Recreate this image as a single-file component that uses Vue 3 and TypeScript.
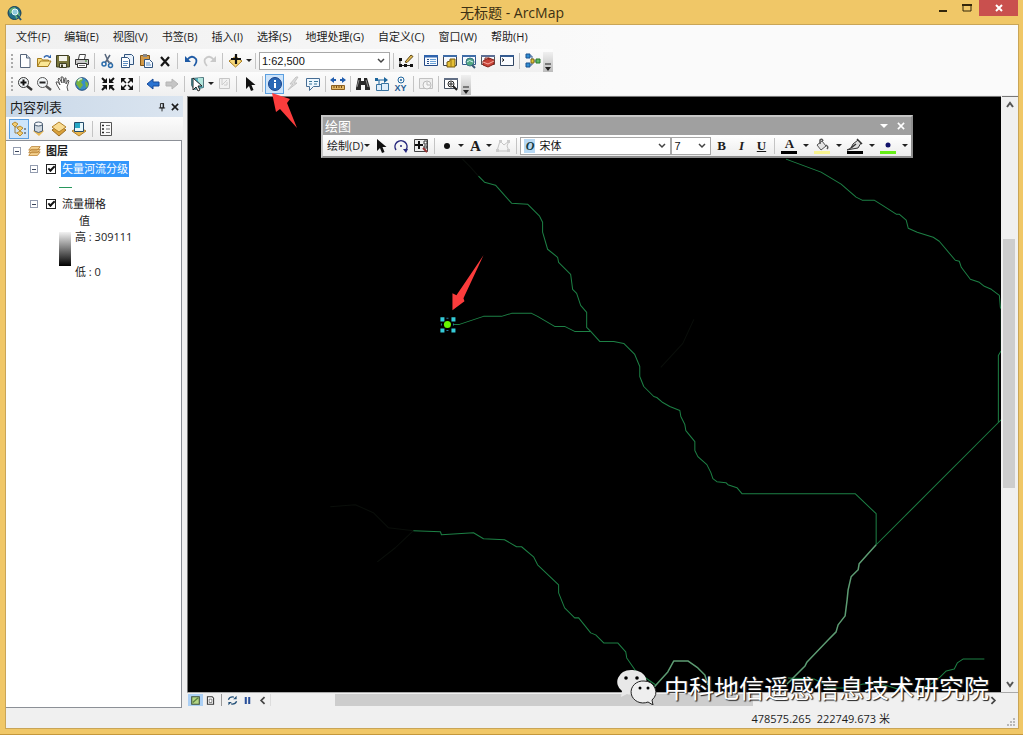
<script setup lang="ts">
import { ref } from 'vue'

interface Tool {
  kind: 'button' | 'sep' | 'thin' | 'caret'
  icon?: string
  label?: string
  active?: boolean
}

const icons: Record<string, string> = {
  new: '<path d="M3.500 1.500h6l3.500 3.500v9.500h-9.500z" fill="#fdfeff" stroke="#56657a"/><path d="M9.500 1.500v3.500h3.500" fill="#cfdbe8" stroke="#56657a"/>',
  open: '<path d="M1.500 13.500v-8h4l1 1.500h6v2" fill="#f7dc7c" stroke="#a37a1c"/><path d="M1.500 13.500l3-5.500h10.500l-3 5.500z" fill="#fbe795" stroke="#a37a1c"/><path d="M8 4.500q2-3 5-1" fill="none" stroke="#2d64b0" stroke-width="1.500"/><path d="M12 5h3v-3.500z" fill="#2d64b0"/>',
  save: '<path d="M1.500 2.500h12l1 1v10.500h-13z" fill="#77743b" stroke="#3f3e22"/><path d="M4 3h8v5h-8z" fill="#f4f4ec"/><path d="M4.500 10.500h7v4h-7z" fill="#e9e9e0" stroke="#3f3e22"/><path d="M6 11.500h2v2.500h-2z" fill="#3f3e22"/>',
  print: '<path d="M4.500 6l1-4.500h6l-1 4.500" fill="#fff" stroke="#444"/><path d="M1.500 6.500h13v5h-13z" fill="#c9c9c9" stroke="#333"/><path d="M3.500 10.500h9v4h-9z" fill="#fff" stroke="#333"/><path d="M5 12.500h6" stroke="#777"/><path d="M11 8h2" stroke="#3a8f2c"/>',
  cut: '<path d="M5 1l4 9M10 2l-5 8" stroke="#56667c" stroke-width="1.500" fill="none"/><circle cx="4" cy="11" r="2" fill="none" stroke="#2b6cab" stroke-width="1.500"/><circle cx="10.500" cy="12.500" r="2" fill="none" stroke="#2b6cab" stroke-width="1.500"/><path d="M7 8l5 2" stroke="#56667c"/>',
  copy: '<path d="M5.500 1.500h7l2 2v8h-9z" fill="#e8f1fb" stroke="#31547e"/><path d="M2.500 4.500h6l2 2v8h-8z" fill="#fff" stroke="#31547e"/><path d="M4 8.500h5M4 10.500h5M4 12.500h4" stroke="#5d8dc0"/>',
  paste: '<path d="M2.500 2.500h9v10h-9z" fill="#d39a47" stroke="#815517"/><path d="M5 1h4v3h-4z" fill="#878787"/><path d="M6.500 6.500h5l3 3v5h-8z" fill="#f3f8ff" stroke="#31547e"/><path d="M8 10h4M8 12h5" stroke="#5d8dc0"/>',
  del: '<path d="M4 4l8 9M12 4l-8 9" stroke="#151515" stroke-width="2.200"/>',
  undo: '<path d="M4 7q5-6 9-1q1.500 3-2 7" fill="none" stroke="#1e5aa5" stroke-width="1.800"/><path d="M2 3v6h6z" fill="#1e5aa5"/>',
  redo: '<path d="M12 7q-5-6-9-1q-1.500 3 2 7" fill="none" stroke="#c9c9c9" stroke-width="1.800"/><path d="M14 3v6h-6z" fill="#c9c9c9"/>',
  add: '<path d="M1 8l6.500-4.500 6.500 4.500-6.500 6z" fill="#f8d878" stroke="#a87c20"/><path d="M8 1v10M3 6h10" stroke="#111" stroke-width="2.200"/>',
  editor: '<path d="M2 12.500h11M2 12.500v-6" stroke="#222" fill="none"/><path d="M1 11h3v3h-3zM6 11h3v3h-3zM12 11h3v3h-3zM1 5h3v3h-3z" fill="#111"/><path d="M7 9l6-7 2 1.500-6 6z" fill="#e7bd53" stroke="#594617"/>',
  toc: '<path d="M1.500 2.500h13v10h-13z" fill="#f6faff" stroke="#244a87"/><path d="M1 2h14v2.500h-14z" fill="#2f64ae"/><path d="M4 6.500h2M4 8.500h2M4 10.500h2" stroke="#244a87"/><path d="M7 6.500h6M7 8.500h6M7 10.500h6" stroke="#6aa0d6"/>',
  catalog: '<path d="M1.500 2.500h13v10h-13z" fill="#f6faff" stroke="#3e4450"/><path d="M1 2h14v2h-14z" fill="#3f6da8"/><path d="M5 9l3-1v-2h5v8h-8z" fill="#e5bf35" stroke="#765b0f"/><path d="M9 6v8" stroke="#9a7816"/>',
  search: '<path d="M1.500 2.500h13v9h-13z" fill="#f6faff" stroke="#35588d"/><path d="M1 2h14v2h-14z" fill="#3f6da8"/><circle cx="9" cy="9" r="4" fill="#53a881" stroke="#3a7185"/><path d="M6 9q2-3 6 0" stroke="#d8f1fc" fill="none"/><path d="M11 12l3 3" stroke="#395877" stroke-width="2"/>',
  toolbox: '<path d="M1.500 2.500h13v9h-13z" fill="#f6faff" stroke="#555"/><path d="M1 2h14v2h-14z" fill="#5d6f94"/><path d="M3 8l6-3 5 2v4l-6 3-5-2z" fill="#c94439" stroke="#842117"/><path d="M5 7v-2h4v2" fill="none" stroke="#842117"/><path d="M3 9l5 2 6-3" fill="none" stroke="#f5ada3"/>',
  python: '<path d="M1.500 2.500h13v10h-13z" fill="#fafcff" stroke="#314562"/><path d="M1 2h14v2h-14z" fill="#345b91"/><path d="M3 5.500l2 1.500-2 1.500" fill="none" stroke="#111"/>',
  model: '<path d="M4 3h3v5h5M4 12h3v-4" fill="none" stroke="#345d99"/><path d="M1 1h4v4h-4zM1 10h4v4h-4z" fill="#318dd2" stroke="#19518e"/><path d="M6 6h3v4h-3z" fill="#e2c839" stroke="#7e6914"/><path d="M11 6h4v4h-4z" fill="#62bd67" stroke="#28762c"/>',
  zoomin: '<path d="M10 10l5 4" stroke="#333" stroke-width="2.500"/><circle cx="6.500" cy="6.500" r="5" fill="#f3f7f9" stroke="#373737"/><path d="M6.500 3.500v6M3.500 6.500h6" stroke="#111" stroke-width="2"/>',
  zoomout: '<path d="M10 10l5 4" stroke="#555" stroke-width="2.500"/><circle cx="6.500" cy="6.500" r="5" fill="#f3f7f9" stroke="#555"/><path d="M3.500 6.500h6" stroke="#222" stroke-width="2"/>',
  pan: '<path d="M5 14l-3-5-1-3 2 0 2 3-2-6 1-1 3 5-1-6h2l1 6 1-5 1 0v6l2-4 1 1-2 6 1 4" fill="#fff" stroke="#555"/>',
  globe: '<circle cx="8" cy="8" r="6.300" fill="#398dc8" stroke="#244c7b"/><path d="M3 4q5-4 6 0l-2 2 2 3-3 4q-2-3-4-5zM11 5l3 2v3l-2 2z" fill="#77b33f"/><path d="M4 5q2-3 4-2" stroke="#e2f8e7" fill="none" stroke-width="1.500"/>',
  fixin: '<path d="M2 2l3 3M14 2l-3 3M2 14l3-3M14 14l-3-3" stroke="#111" stroke-width="2"/><path d="M7 2v5h-5zM9 2v5h5zM7 14v-5h-5zM9 14v-5h5z" fill="#111"/>',
  fixout: '<path d="M3 3l4 4M13 3l-4 4M3 13l4-4M13 13l-4-4" stroke="#111" stroke-width="1.500"/><path d="M2 7v-5h5zM14 7v-5h-5zM2 9v5h5zM14 9v5h-5z" fill="#111"/>',
  back: '<path d="M2 8l6-5v3h6v4h-6v3z" fill="#2a73d1" stroke="#174a99"/>',
  forward: '<path d="M14 8l-6-5v3h-6v4h6v3z" fill="#c5c5c5" stroke="#b5b5b5"/>',
  select: '<path d="M1.500 2.500l12-1v10l-9 2-3-4z" fill="#50b9c8" stroke="#52777e"/><path d="M8 2l5 0v9l-5-6z" fill="#b4e6dc"/><path d="M3 2v12l3-3 2 4 2-1-2-4h4z" fill="#fff" stroke="#222"/>',
  clear: '<path d="M3.500 2.500h10v10h-10z" fill="#f1f1f1" stroke="#c6c6c6"/><path d="M6 3v6l5-5M8 9h3v-3" fill="none" stroke="#ccc"/>',
  pointer: '<path d="M4 1v12l3-3 2 5 2.500-1-2-5h4z" fill="#101010"/>',
  identify: '<circle cx="8" cy="8" r="6.500" fill="#2a68b5" stroke="#1a438a"/><path d="M7 7h2v5h-2zM7 4h2v2h-2z" fill="#fff"/>',
  flash: '<path d="M10 1l-6 7h3l-5 6 9-7h-3l4-6z" fill="#ddd" stroke="#c4c4c4"/>',
  popup: '<path d="M1.500 2.500h13v8h-6l-4 4v-4h-3z" fill="#eef7ff" stroke="#466d94"/><path d="M4 5.500h3M4 8h3M9 5.500h4M9 8h3" stroke="#3b789a"/>',
  measure: '<path d="M3 4h3M10 4h3" stroke="#215dae" stroke-width="2"/><path d="M0 4l4-3v6zM16 4l-4-3v6z" fill="#215dae"/><path d="M1.500 9.500h13v4h-13z" fill="#e3b764" stroke="#8d6122"/><path d="M4 10v2M6.500 10v2M9 10v2M11.500 10v2" stroke="#744a13"/>',
  find: '<path d="M3 2h3v3h3v-3h3l3 10v2h-5v-5h-4v5h-5v-2z" fill="#272727"/><path d="M4 4l-2 7M11 4l2 7" stroke="#888"/>',
  goto: '<path d="M3 4h8M5 4v5" stroke="#1c659c" fill="none"/><path d="M10 1l4 3-4 3zM1 2h3v3h-3z" fill="#1c659c"/><path d="M2.500 8.500h5v6h-5zM7.500 7.500h7v7h-7z" fill="#dfedf9" stroke="#3973a0"/>',
  viewer: '<path d="M1.500 2.500h13v10h-13z" fill="#fff" stroke="#454e5c"/><path d="M1 2h14v2h-14z" fill="#626f85"/><circle cx="8" cy="8" r="3" fill="#fff" stroke="#222"/><path d="M10 10l4 4" stroke="#222" stroke-width="2"/><path d="M6 8h4M8 6v4" stroke="#222"/>',
  time: '<path d="M1.500 2.500h13v10h-13z" fill="#eee" stroke="#c1c1c1"/><circle cx="9" cy="9" r="4" fill="#f5f5f5" stroke="#bbb"/><path d="M9 6v3h3" stroke="#bbb" fill="none"/>',
  listorder: '<path d="M4 4v8h5M4 6h4" stroke="#9b8047" fill="none"/><path d="M1 3l3-2 3 2-3 3zM6 7l3-2 3 2-3 3zM6 12l3-2 3 2-3 3z" fill="#f2cd72" stroke="#b78c34"/><path d="M13 8h2M13 12h2" stroke="#333"/>',
  listsource: '<path d="M2 10l6 5 5-5-5-3z" fill="#e9b64f"/><path d="M3.500 3v7q4 3 8 0v-7z" fill="#ced7df" stroke="#485b70"/><ellipse cx="7.500" cy="3" rx="4" ry="2" fill="#f5f7fa" stroke="#485b70"/>',
  listvisible: '<path d="M1 9l7-5 7 5-7 6z" fill="#daa13b" stroke="#9b6c20"/><path d="M1 6l7-5 7 5-7 5z" fill="#f9dc93" stroke="#b1812b"/>',
  listselect: '<path d="M1 10l7-4 7 4-7 5z" fill="#e9b64f" stroke="#b1812b"/><path d="M3.500 1.500h9v9h-9z" fill="#e7f7fb" stroke="#244b69"/><path d="M4 2h5v5h-5z" fill="#27a7c4"/>',
  options: '<path d="M2.500 1.500h11v13h-11z" fill="#fafafa" stroke="#555"/><path d="M4 4.500h2M4 8h2M4 11.500h2" stroke="#222" stroke-width="1.500"/><path d="M8 4.500h4M8 8h4M8 11.500h4" stroke="#777"/>',
  layers: '<path d="M2 13l3-4h10l-3 4zM2 10l3-4h10l-3 4zM2 7l3-4h10l-3 4z" fill="#fbdc9c" stroke="#b87f30"/>',
  rotate: '<path d="M3 12a6 6 0 1 1 10 0" fill="none" stroke="#27287d" stroke-width="1.500"/><path d="M10 11h5l-2 4z" fill="#27287d"/><circle cx="8" cy="8" r="1" fill="#27287d"/>',
  zoomsel: '<path d="M1.500 1.500h13v12h-13z" fill="#eee" stroke="#444"/><path d="M6 3v8M2 7h8" stroke="#111" stroke-width="2"/><path d="M11 3h3v3h-3zM11 8h3v2h-3z" fill="#fff" stroke="#333"/><path d="M10 10l4 4" stroke="#963131" stroke-width="2"/>',
  dot: '<circle cx="8" cy="8" r="3" fill="#111"/>',
  vertices: '<path d="M2 13l3-10 4 4 5-4-2 5 2 5z" fill="none" stroke="#c4c4c4"/><path d="M1 11h3v3h-3zM4 2h3v3h-3zM12 2h3v3h-3zM12 11h3v3h-3z" fill="#ccc"/>',
  bucket: '<path d="M3 7l5-4 4 5-5 4z" fill="#e4e4e4" stroke="#555"/><path d="M6 6v-4q2-2 3 1M12 7q3 2 1 4" fill="none" stroke="#555" stroke-width="1.500"/>',
  pen: '<path d="M0 12l4-2 2-4 5-4 3 3-3 5-6 1z" fill="#ddd" stroke="#333"/><path d="M4 10l5-4M10 1l5 5" stroke="#333" stroke-width="1.500"/>',
  bluedot: '<circle cx="8" cy="7" r="2.500" fill="#11126a"/>',
  dataview: '<path d="M2.500 2.500h11v11h-11z" fill="#b5d785" stroke="#3b4d36" stroke-width="1.500"/><path d="M4 11l8-7" stroke="#5d8240" stroke-width="2"/>',
  layoutview: '<path d="M3.500 2.500h7l2 2v9h-9z" fill="#fff" stroke="#333" stroke-width="1.500"/><path d="M6 6h4v5h-4z" fill="none" stroke="#555"/>',
  refresh: '<path d="M2 7q2-5 8-4M14 9q-2 5-8 4" fill="none" stroke="#235078" stroke-width="1.800"/><path d="M9 6h5v-5zM7 10h-5v5z" fill="#235078"/>',
  pause: '<path d="M4 3h3v10h-3zM9 3h3v10h-3z" fill="#294f99"/>',
  left: '<path d="M11 3l-5 5 5 5" fill="none" stroke="#444" stroke-width="2.500"/>',
  right: '<path d="M5 3l5 5-5 5" fill="none" stroke="#444" stroke-width="2.500"/>',
  pin: '<path d="M5.500 2.500h5v7h-5zM3 9.500h10M8 10v5" fill="none" stroke="#222" stroke-width="1.500"/><path d="M9 2h2v7h-2z" fill="#222"/>',
  close: '<path d="M3 3l10 10M13 3l-10 10" fill="none" stroke="currentColor" stroke-width="2.500"/>',
}

const b = (icon: string, label: string, active = false): Tool => ({ kind: 'button', icon, label, active })
const sep: Tool = { kind: 'sep' }
const thin: Tool = { kind: 'thin' }
const caret: Tool = { kind: 'caret' }

const menus = ['文件(F)', '编辑(E)', '视图(V)', '书签(B)', '插入(I)', '选择(S)', '地理处理(G)', '自定义(C)', '窗口(W)', '帮助(H)']

const fileTools: Tool[] = [
  b('new', '新建'), b('open', '打开'), b('save', '保存'), b('print', '打印'), sep,
  b('cut', '剪切'), b('copy', '复制'), b('paste', '粘贴'), b('del', '删除'), sep,
  b('undo', '撤消'), b('redo', '恢复'), sep, b('add', '添加数据'), caret, sep,
]
const windowTools: Tool[] = [
  thin, b('editor', '编辑器'), thin, b('toc', '内容列表'), b('catalog', '目录'), b('search', '搜索'),
  b('toolbox', '工具箱'), b('python', 'Python'), sep, b('model', '模型构建器'),
]
const navTools: Tool[] = [
  b('zoomin', '放大'), b('zoomout', '缩小'), b('pan', '平移'), b('globe', '全图'), sep,
  b('fixin', '固定比例放大'), b('fixout', '固定比例缩小'), sep, b('back', '后退'), b('forward', '前进'), sep,
  b('select', '选择要素'), caret, b('clear', '清除选择'), sep, b('pointer', '选择元素'), thin,
  b('identify', '识别', true), b('flash', '超链接'), b('popup', 'HTML 弹出窗口'), thin,
  b('measure', '测量'), thin, b('find', '查找'), b('goto', '查找路径'),
]
const tailTools: Tool[] = [thin, b('time', '时间滑块'), thin, b('viewer', '查看器窗口')]
const listTools: Tool[] = [
  b('listorder', '按绘制顺序列出', true), b('listsource', '按源列出'), b('listvisible', '按可见性列出'),
  b('listselect', '按选择列出'), sep, b('options', '选项'),
]
const shapeTools: Tool[] = [b('pointer', '选择'), b('rotate', '旋转'), b('zoomsel', '缩放至元素'), thin, b('dot', '标记'), caret]

const scale = ref('1:62,500')
const fontName = ref('宋体')
const fontSize = ref('7')
const riverVisible = ref(true)
const flowVisible = ref(true)

const rivers = [
  '478,177 484,183 495,186 511,204 527,205 539,217 542,223 542,233 547,250 557,258 558,263 570,275 572,290 576,294 580,306 586,313 586,328 590,332 599,342 613,342 623,344 634,355 639,367 639,377 643,387 653,397 656,398 662,403 669,407 679,411 680,417 684,425 685,431 694,442 694,451 697,457 706,465 710,473 712,479 716,482 725,483 727,485 736,488 741,494 854,494 875,514 875,545',
  '453,325 459,325 483,317 501,317 511,314 531,314 537,317 554,327 564,327 574,332 590,332',
  '785,160 820,173 840,185 855,198 861,201 873,201 881,206 895,215 898,215 905,221 907,229 916,233 932,238 938,242 954,261 958,262 960,268 969,280 978,283 983,287 990,290 998,296 999,308 1000,310 1000,351 997,356 997,423',
  '1001,419 875,545',
  '413,531 440,532 441,535 473,533 483,539 504,540 516,547 521,547 533,557 537,565 558,585 558,593 564,608 574,618 578,618 590,633 595,635 603,643 617,643 625,652 626,658 635,671 655,685',
  '983,659 962,659 956,663 953,669 945,671 939,677 930,684 915,691',
  '787,678 813,679 823,684 827,688 845,688 862,684 880,684 900,690',
]
const channels = [
  '875,545 866,555 858,564 857,570 850,577 847,590 846,600 844,616 837,625 835,632 827,640 806,662 804,666 793,677 786,684',
  '650,691 657,683 667,672 673,661 687,661 697,668 704,675 707,685',
]
const faint = ['413,531 388,528 373,513 355,505 330,507', '413,531 395,548 377,562', '478,177 470,168 462,160', '693,320 682,344 660,368']
</script>

<template>
  <div class="window">
    <header class="titlebar">
      <svg class="app-icon" viewBox="0 0 16 16" aria-hidden="true">
        <circle cx="7.5" cy="8" r="6.500" fill="#216c86" stroke="#163e58" />
        <path d="M2 5q4-4 7-2l-3 4-3 2zM8 10l4-3 1 4-4 3z" fill="#63ae75" />
        <circle cx="8" cy="7" r="3" fill="#8fcbdc" stroke="#e8f7fb" />
        <path d="M10 10l4 5" stroke="#1f5479" stroke-width="2" />
      </svg>
      <h1>无标题 - ArcMap</h1>
      <div class="window-buttons">
        <button class="min" aria-label="最小化"><svg viewBox="0 0 12 12"><path d="M2 8h8v2h-8z" fill="#33260b" /></svg></button>
        <button class="max" aria-label="最大化"><svg viewBox="0 0 12 12"><path d="M2 3h8v6h-8z" fill="none" stroke="#33260b" /><path d="M1 2h10v2h-10z" fill="#33260b" /></svg></button>
        <button class="shut" aria-label="关闭"><svg viewBox="0 0 12 12"><path d="M3 3l6 6M9 3l-6 6" stroke="#fff" stroke-width="2" /></svg></button>
      </div>
    </header>

    <div class="client">
      <nav class="menubar">
        <button v-for="m in menus" :key="m">{{ m }}</button>
      </nav>

      <div class="toolbar">
        <span class="grip"></span>
        <template v-for="(t, i) in fileTools" :key="i">
          <button v-if="t.kind === 'button'" class="tool" :aria-label="t.label"><svg viewBox="0 0 16 16" v-html="icons[t.icon!]"></svg></button>
          <span v-else :class="t.kind"></span>
        </template>
        <div class="combo scale">
          <select v-model="scale" aria-label="比例尺"><option>1:62,500</option></select>
          <svg viewBox="0 0 8 8"><path d="M1 2l3 3 3-3" /></svg>
        </div>
        <template v-for="(t, i) in windowTools" :key="i">
          <button v-if="t.kind === 'button'" class="tool" :aria-label="t.label"><svg viewBox="0 0 16 16" v-html="icons[t.icon!]"></svg></button>
          <span v-else :class="t.kind"></span>
        </template>
        <button class="overflow" aria-label="工具条选项"><svg viewBox="0 0 10 10"><path d="M2 2h6" stroke="#222" /><path d="M2 5h6l-3 4z" fill="#222" /></svg></button>
      </div>

      <div class="toolbar">
        <span class="grip"></span>
        <template v-for="(t, i) in navTools" :key="i">
          <button v-if="t.kind === 'button'" class="tool" :class="{ active: t.active }" :aria-label="t.label"><svg viewBox="0 0 16 16" v-html="icons[t.icon!]"></svg></button>
          <span v-else :class="t.kind"></span>
        </template>
        <button class="tool xy" aria-label="转到 XY">
          <svg viewBox="0 0 8 8"><circle cx="4" cy="4" r="3" fill="none" stroke="#1f669f" /><circle cx="4" cy="4" r="1" fill="#1f669f" /></svg>
          <span>XY</span>
        </button>
        <template v-for="(t, i) in tailTools" :key="i">
          <button v-if="t.kind === 'button'" class="tool" :aria-label="t.label"><svg viewBox="0 0 16 16" v-html="icons[t.icon!]"></svg></button>
          <span v-else :class="t.kind"></span>
        </template>
        <button class="overflow" aria-label="工具条选项"><svg viewBox="0 0 10 10"><path d="M2 2h6" stroke="#222" /><path d="M2 5h6l-3 4z" fill="#222" /></svg></button>
      </div>

      <main class="workspace">
        <aside class="contents">
          <div class="panel-title">
            <h2>内容列表</h2>
            <button aria-label="自动隐藏"><svg viewBox="0 0 16 16" v-html="icons.pin"></svg></button>
            <button aria-label="关闭面板"><svg viewBox="0 0 16 16" v-html="icons.close"></svg></button>
          </div>
          <div class="panel-tools">
            <template v-for="(t, i) in listTools" :key="i">
              <button v-if="t.kind === 'button'" class="tool" :class="{ active: t.active }" :aria-label="t.label"><svg viewBox="0 0 16 16" v-html="icons[t.icon!]"></svg></button>
              <span v-else :class="t.kind"></span>
            </template>
          </div>
          <div class="tree">
            <div class="node">
              <button class="toggle" aria-label="折叠"></button>
              <svg class="layer-icon" viewBox="0 0 16 16" v-html="icons.layers"></svg>
              <strong>图层</strong>
            </div>
            <div class="node child">
              <button class="toggle" aria-label="折叠"></button>
              <input id="river" v-model="riverVisible" type="checkbox" />
              <label for="river" class="selected">矢量河流分级</label>
            </div>
            <div class="line-symbol"></div>
            <div class="node child">
              <button class="toggle" aria-label="折叠"></button>
              <input id="flow" v-model="flowVisible" type="checkbox" />
              <label for="flow">流量栅格</label>
            </div>
            <div class="value">值</div>
            <div class="legend">
              <span class="ramp"></span>
              <div class="range"><span>高 : 309111</span><span>低 : 0</span></div>
            </div>
          </div>
        </aside>

        <section class="view">
          <div class="map">
            <svg class="canvas" viewBox="188 98 813 594" preserveAspectRatio="xMinYMin slice" role="img" aria-label="河流分级地图">
              <g fill="none" stroke-linejoin="round">
                <polyline v-for="p in faint" :key="p" :points="p" stroke="#0a0e0a" />
                <polyline v-for="p in rivers" :key="p" :points="p" stroke="#1d8045" />
                <polyline v-for="p in channels" :key="p" :points="p" stroke="#5d9c73" stroke-width="1.500" />
              </g>
              <circle cx="447" cy="325" r="3.500" fill="#66f600" />
              <path d="M440 318h4v4h-4zM451 318h4v4h-4zM440 329h4v4h-4zM451 329h4v4h-4z" fill="#35cbd8" />
              <path d="M446 319h2M446 331h2M441 324v2M453 324v2" stroke="#2b7a9c" />
              <path d="M452 311v-17l4 2 27-40-20 43 1 3z" fill="#fb3c3c" />
            </svg>

            <div class="drawing">
              <div class="drawing-title">
                <h2>绘图</h2>
                <button aria-label="选项"><svg viewBox="0 0 10 10"><path d="M1 3h8l-4 4z" fill="#fff" /></svg></button>
                <button aria-label="关闭工具条"><svg viewBox="0 0 16 16" v-html="icons.close"></svg></button>
              </div>
              <div class="drawing-tools">
                <button class="draw-menu">绘制(D)</button><span class="caret"></span>
                <template v-for="(t, i) in shapeTools" :key="i">
                  <button v-if="t.kind === 'button'" class="tool" :aria-label="t.label"><svg viewBox="0 0 16 16" v-html="icons[t.icon!]"></svg></button>
                  <span v-else :class="t.kind"></span>
                </template>
                <button class="tool letter large">A</button><span class="caret"></span>
                <button class="tool" aria-label="编辑折点"><svg viewBox="0 0 16 16" v-html="icons.vertices"></svg></button>
                <span class="sep"></span>
                <div class="combo font">
                  <span class="font-badge">O</span>
                  <select v-model="fontName" aria-label="字体"><option>宋体</option></select>
                  <svg viewBox="0 0 8 8"><path d="M1 2l3 3 3-3" /></svg>
                </div>
                <div class="combo size">
                  <select v-model="fontSize" aria-label="字号"><option>7</option></select>
                  <svg viewBox="0 0 8 8"><path d="M1 2l3 3 3-3" /></svg>
                </div>
                <button class="tool letter">B</button>
                <button class="tool letter italic">I</button>
                <button class="tool letter under">U</button>
                <span class="thin"></span>
                <button class="swatch black letter">A</button><span class="caret"></span>
                <button class="swatch yellow" aria-label="填充颜色"><svg viewBox="0 0 16 13" v-html="icons.bucket"></svg></button><span class="caret"></span>
                <button class="swatch black" aria-label="线颜色"><svg viewBox="0 0 16 13" v-html="icons.pen"></svg></button><span class="caret"></span>
                <button class="swatch green" aria-label="标记颜色"><svg viewBox="0 0 16 13" v-html="icons.bluedot"></svg></button><span class="caret"></span>
              </div>
            </div>
          </div>

          <div class="vscroll">
            <button aria-label="向上滚动"><svg viewBox="0 0 10 10"><path d="M2 7l3-4 3 4" /></svg></button>
            <span class="before"></span><span class="thumb"></span><span class="after"></span>
            <button aria-label="向下滚动"><svg viewBox="0 0 10 10"><path d="M2 3l3 4 3-4" /></svg></button>
          </div>

          <div class="viewbar">
            <button class="on" aria-label="数据视图"><svg viewBox="0 0 16 16" v-html="icons.dataview"></svg></button>
            <button aria-label="布局视图"><svg viewBox="0 0 16 16" v-html="icons.layoutview"></svg></button>
            <span class="divider"></span>
            <button aria-label="刷新"><svg viewBox="0 0 16 16" v-html="icons.refresh"></svg></button>
            <button aria-label="暂停绘制"><svg viewBox="0 0 16 16" v-html="icons.pause"></svg></button>
            <button aria-label="向左滚动"><svg viewBox="0 0 16 16" v-html="icons.left"></svg></button>
            <div class="hscroll"><span class="before"></span><span class="thumb"></span><span class="after"></span></div>
            <button aria-label="向右滚动"><svg viewBox="0 0 16 16" v-html="icons.right"></svg></button>
          </div>

          <div class="watermark">
            <svg viewBox="0 0 40 36" aria-hidden="true">
              <path d="M14 1a14 12 0 0 0-9 21l-1 6 6-3q3 1 7 0a14 12 0 1 0-3-24z" fill="#e8e8e8" />
              <path d="M27 12a12 11 0 1 0 4 21l5 3-1-5a12 11 0 0 0-8-19z" fill="#eee" stroke="#222" />
              <circle cx="9" cy="9" r="1.800" /><circle cx="20" cy="9" r="1.800" /><circle cx="23" cy="19" r="1.500" /><circle cx="31" cy="19" r="1.500" />
            </svg>
            <span>中科地信遥感信息技术研究院</span>
          </div>
        </section>
      </main>

      <footer class="statusbar">
        <span>478575.265&nbsp; 222749.673 米</span>
        <svg viewBox="0 0 9 9"><path d="M7 1h2v2h-2zM4 4h2v2h-2zM7 4h2v2h-2zM1 7h2v2h-2zM4 7h2v2h-2zM7 7h2v2h-2z" fill="#b8b8b8" /></svg>
      </footer>
    </div>

    <svg class="callout" viewBox="0 0 28 38" aria-hidden="true"><path d="M1 1l18 6-3 4 10 25-17-19-4 3z" fill="#fb3c3c" /></svg>
  </div>
</template>

<style>
body {
  margin: 0;
}
</style>

<style scoped>
.window {
  box-sizing: border-box;
  position: relative;
  display: flex;
  flex-direction: column;
  height: 100vh;
  padding: 0 5px 6px 6px;
  background: #f0c767;
  border-bottom: 1px solid #c4973c;
  color: #1c1c1c;
  font: 11px/16px "Open Sans", "Noto Sans CJK SC", sans-serif;
}
button {
  display: flex;
  align-items: center;
  justify-content: center;
  flex: none;
  margin: 0;
  padding: 0;
  border: 0;
  background: none;
  color: inherit;
  font: inherit;
}
h1,
h2 {
  margin: 0;
  font-weight: 400;
}
.titlebar {
  display: grid;
  grid-template-columns: 1fr auto 1fr;
  align-items: center;
  flex: none;
  height: 25px;
}
.titlebar h1 {
  font-size: 14px;
  line-height: 24px;
  color: #3c3013;
}
.app-icon {
  width: 16px;
  height: 16px;
  margin-left: 1px;
}
.window-buttons {
  display: flex;
  justify-content: flex-end;
  align-self: start;
}
.window-buttons button {
  width: 24px;
  height: 16px;
}
.window-buttons .shut {
  width: 39px;
  background: #c9504e;
}
.window-buttons svg {
  width: 12px;
  height: 12px;
}
.client {
  display: flex;
  flex: 1;
  flex-direction: column;
  min-height: 0;
  background: linear-gradient(to right, #f0f0f0, #fafafa 60%);
  outline: 1px solid #c9a557;
}
.menubar {
  display: flex;
  height: 24px;
  padding-left: 3px;
}
.menubar button {
  padding: 0 7px;
}
.toolbar {
  display: flex;
  align-items: center;
  align-self: flex-start;
  height: 23px;
  padding-left: 5px;
  background: linear-gradient(#fcfcfc, #f0f0f0);
}
.grip {
  width: 2px;
  height: 14px;
  margin-right: 2px;
  background: repeating-linear-gradient(#aaa 0 2px, transparent 2px 4px);
}
.tool {
  box-sizing: border-box;
  width: 19px;
  height: 20px;
}
.tool svg {
  width: 16px;
  height: 16px;
  flex: none;
}
.tool.active {
  border: 1px solid #5b9fe0;
  background: #cde4fa;
}
.sep,
.thin {
  flex: none;
  width: 7px;
  height: 16px;
  background: linear-gradient(#c4c4c4, #c4c4c4) center / 1px 100% no-repeat;
}
.thin {
  width: 6px;
}
.caret {
  display: flex;
  flex: none;
  justify-content: center;
  width: 7px;
}
.caret::after {
  content: "";
  border: 3px solid transparent;
  border-top-color: #222;
  border-bottom: 0;
}
.combo {
  box-sizing: border-box;
  display: grid;
  grid-template-columns: 1fr 16px;
  align-items: center;
  flex: none;
  height: 18px;
  border: 1px solid #a8a8a8;
  background: #fff;
}
.combo select {
  grid-area: 1 / 1 / 2 / 3;
  width: 100%;
  height: 16px;
  padding: 0 2px;
  border: 0;
  appearance: none;
  background: none;
  color: #111;
  font: 11px/16px "Liberation Sans", "Noto Sans CJK SC", sans-serif;
}
.combo svg {
  grid-area: 1 / 2;
  width: 8px;
  height: 8px;
  margin-left: 4px;
  pointer-events: none;
  fill: none;
  stroke: #444;
  stroke-width: 1.500;
}
.scale {
  width: 131px;
}
.overflow {
  align-self: flex-end;
  align-items: flex-end;
  width: 10px;
  height: 20px;
  margin-left: 1px;
  background: linear-gradient(#f0f0f0, #bcbcbc);
}
.overflow svg {
  width: 10px;
  height: 10px;
}
.tool.xy {
  flex-direction: column;
}
.xy svg {
  width: 8px;
  height: 8px;
}
.xy span {
  color: #1f5b94;
  font: bold 9px/8px "Liberation Sans", sans-serif;
}
.workspace {
  display: flex;
  flex: 1;
  gap: 4px;
  min-height: 0;
  border-top: 1px solid #f0f0f0;
  background: #f0f0f0;
}
.contents {
  display: flex;
  flex: none;
  flex-direction: column;
  width: 177px;
}
.panel-title {
  display: flex;
  align-items: center;
  height: 21px;
  padding: 0 2px 0 4px;
  background: linear-gradient(to right, #c9d8e8, #dbe5f0);
}
.panel-title h2 {
  flex: 1;
  font-size: 13px;
}
.panel-title button {
  width: 13px;
}
.panel-title svg {
  width: 10px;
  height: 10px;
}
.panel-tools {
  display: flex;
  align-items: center;
  height: 23px;
  padding-left: 3px;
  background: linear-gradient(#fcfcfc, #ededed);
}
.panel-tools .tool {
  width: 20px;
}
.tree {
  box-sizing: border-box;
  flex: 1;
  margin-right: 1px;
  padding: 1px 0 0 7px;
  border: 1px solid #8c9097;
  border-left: 0;
  background: #fff;
}
.node {
  display: flex;
  align-items: center;
  height: 18px;
}
.child {
  padding-left: 17px;
}
.toggle {
  box-sizing: border-box;
  width: 8px;
  height: 8px;
  border: 1px solid #949db0;
}
.toggle::after {
  content: "";
  width: 4px;
  height: 1px;
  background: #39445c;
}
.layer-icon {
  width: 14px;
  height: 14px;
  margin: 0 5px 0 6px;
}
.node input {
  display: flex;
  align-items: center;
  justify-content: center;
  box-sizing: border-box;
  width: 10px;
  height: 10px;
  margin: 0 5px 0 8px;
  border: 1px solid #222;
  appearance: none;
  background: #fff;
}
.node input:checked::after {
  content: "";
  width: 5px;
  height: 2px;
  margin-bottom: 2px;
  border: solid #111;
  border-width: 0 0 2px 2px;
  transform: rotate(-45deg);
}
.node label {
  padding: 0 1px;
}
.node .selected {
  background: #3397fb;
  color: #fff;
}
.line-symbol {
  width: 13px;
  height: 9px;
  margin: 0 0 7px 46px;
  border-bottom: 1px solid #28975c;
}
.value {
  margin-left: 66px;
}
.legend {
  display: flex;
  gap: 4px;
  margin-left: 46px;
}
.ramp {
  width: 12px;
  height: 34px;
  margin-top: 3px;
  background: linear-gradient(#f2f2f2, #000);
}
.range {
  display: flex;
  flex-direction: column;
  justify-content: space-between;
  height: 51px;
}
.view {
  position: relative;
  display: grid;
  flex: 1;
  grid-template: minmax(0, 1fr) 16px / minmax(0, 1fr) 17px;
  min-width: 0;
}
.map {
  position: relative;
  overflow: hidden;
  border-top: 1px solid #777;
  border-left: 1px solid #777;
  background: #000;
}
.canvas {
  display: block;
  width: 100%;
  height: 100%;
}
.drawing {
  box-sizing: border-box;
  position: absolute;
  top: 18px;
  left: 133px;
  border: 2px solid #8e8e8e;
  border-top-color: #c6c6c6;
  border-left-color: #c6c6c6;
  background: #f4f4f4;
}
.drawing-title {
  display: flex;
  align-items: center;
  height: 18px;
  padding: 0 2px;
  background: #a0a0a0;
  color: #fff;
}
.drawing-title h2 {
  flex: 1;
  font-size: 13px;
}
.drawing-title button {
  width: 17px;
}
.drawing-title svg {
  width: 10px;
  height: 10px;
}
.drawing-tools {
  display: flex;
  align-items: center;
  height: 21px;
  padding: 0 2px 0 4px;
  background: linear-gradient(#fff, #ececec);
}
.drawing-tools .tool {
  width: 20px;
}
.drawing-tools .caret {
  width: 8px;
}
.letter {
  font: bold 13px/14px "Liberation Serif", serif;
}
.letter.large {
  font-size: 15px;
}
.italic {
  font-style: italic;
}
.under {
  text-decoration: underline;
}
.combo.font {
  grid-template-columns: 16px 1fr 16px;
  width: 151px;
}
.font select {
  grid-area: 1 / 2 / 2 / 4;
}
.font svg {
  grid-area: 1 / 3;
}
.font-badge {
  width: 11px;
  margin-left: 3px;
  background: #b7d8f3;
  color: #123b42;
  font: italic bold 12px/14px "Liberation Serif", serif;
  text-align: center;
}
.combo.size {
  width: 40px;
}
.swatch {
  box-sizing: border-box;
  width: 16px;
  height: 17px;
  margin: 0 5px 0 4px;
  border-bottom: 3px solid #000;
}
.swatch svg {
  width: 16px;
  height: 13px;
}
.swatch.yellow {
  border-color: #f7f38f;
}
.swatch.green {
  border-color: #66ee18;
}
.vscroll {
  display: flex;
  flex-direction: column;
  margin-left: 1px;
  border-top: 1px solid #777;
  background: #f0f0f0;
}
.vscroll button {
  height: 16px;
}
.vscroll svg {
  width: 10px;
  height: 10px;
  fill: none;
  stroke: #555;
  stroke-width: 2;
}
.vscroll .before {
  flex: 126;
}
.vscroll .thumb {
  flex: 250;
  margin: 0 3px 0 1px;
}
.vscroll .after {
  flex: 189;
}
.thumb {
  background: #cdcdcd;
}
.viewbar {
  display: flex;
  align-items: stretch;
  grid-column: 1 / 3;
  padding: 1px 17px 2px 1px;
  border-top: 1px solid #aaa;
  box-sizing: border-box;
  background: #f0f0f0;
}
.viewbar button {
  width: 15px;
}
.viewbar svg {
  width: 11px;
  height: 11px;
}
.viewbar .on {
  background: #acd0f5;
}
.divider {
  width: 1px;
  margin: 0 3px;
  background: #999;
}
.hscroll {
  display: flex;
  flex: 1;
  background: #f0f0f0;
}
.hscroll .before {
  flex: 64;
  border-left: 1px solid #ddd;
}
.hscroll .thumb {
  flex: 419;
}
.hscroll .after {
  flex: 234;
}
.watermark {
  position: absolute;
  right: 29px;
  bottom: 3px;
  display: flex;
  align-items: center;
  gap: 7px;
  color: #fff;
  font: 25px/34px "Noto Sans CJK SC", sans-serif;
  text-shadow: 1px 1px 1px #222, 1px 0 1px #444;
  white-space: nowrap;
}
.watermark svg {
  width: 40px;
  height: 36px;
}
.statusbar {
  display: flex;
  align-items: center;
  justify-content: flex-end;
  box-sizing: border-box;
  flex: none;
  height: 20px;
  padding: 2px 3px 0 0;
  background: #f0f0f0;
}
.statusbar span {
  margin-right: 116px;
}
.statusbar svg {
  align-self: flex-end;
  width: 9px;
  height: 9px;
  margin-bottom: 2px;
}
.callout {
  position: absolute;
  top: 92px;
  left: 271px;
  width: 28px;
  height: 38px;
  pointer-events: none;
}
</style>
